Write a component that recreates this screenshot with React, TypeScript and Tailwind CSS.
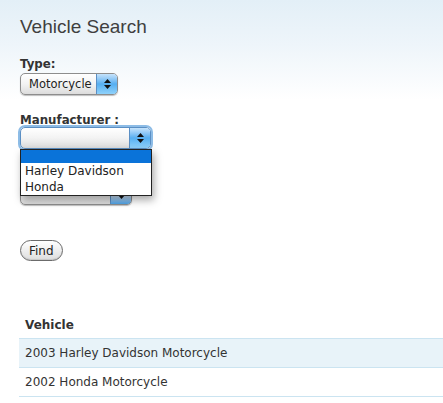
import React from "react";

const bodyFont = { fontFamily: '"DejaVu Sans", Verdana, sans-serif' };

function Arrows({ dim }: { dim?: boolean }) {
	return (
		<div
			className={`flex w-[21px] flex-col items-center justify-center gap-[2px] self-stretch rounded-r-[4px] border-l border-[#5b8fc4] ${
				dim ? "bg-gradient-to-b from-[#f4f8fc] via-[#e6eef7] to-[#4aa3e8]" : "bg-gradient-to-b from-[#c6e3fb] via-[#55aef0] to-[#8fd2fb]"
			}`}>
			<svg width="7" height="4" viewBox="0 0 7 4">
				<path d="M3.5 0L7 4H0z" fill={dim ? "#c8ccd2" : "#111"} />
			</svg>
			<svg width="7" height="4" viewBox="0 0 7 4">
				<path d="M0 0h7L3.5 4z" fill="#111" />
			</svg>
		</div>
	);
}

function FakeSelect({ value, width, focused, dim }: { value: string; width: string; focused?: boolean; dim?: boolean }) {
	return (
		<div
			className={`flex h-[22px] ${width} items-stretch rounded-[5px] border ${
				focused ? "border-[#5b8fc4] shadow-[0_0_0_2px_#8dbce6]" : "border-[#8d8d8d] shadow-[0_1px_1px_rgba(0,0,0,0.25)]"
			} bg-gradient-to-b from-white via-[#f3f3f3] to-[#dcdcdc]`}>
			<span className="flex-1 truncate pl-2 text-[11.5px] leading-[20px] text-[#222]" style={bodyFont}>
				{value}
			</span>
			<Arrows dim={dim} />
		</div>
	);
}

export default function App() {
	return (
		<div className="min-h-[403px] w-[443px] bg-white" style={bodyFont}>
			<div className="bg-[linear-gradient(to_bottom,#e3eff7_0px,#eef5fa_45px,#ffffff_100px)] bg-no-repeat">
				<div className="pl-[20px] pt-[15px]">
					<h1 className="text-[19px] leading-[24px] text-[#3f3f3f]" style={{ fontFamily: '"Liberation Sans", Arial, sans-serif' }}>
						Vehicle Search
					</h1>

					<label className="mt-[18px] block text-[11.8px] font-bold leading-[14px] text-[#333]">Type:</label>
					<div className="mt-[2px]">
						<FakeSelect value="Motorcycle" width="w-[98px]" />
					</div>

					<label className="mt-[18px] block text-[11.8px] font-bold leading-[14px] text-[#333]">Manufacturer :</label>
					<div className="relative">
						<FakeSelect value="" width="w-[131px]" focused />

						{/* open option list */}
						<div className="absolute left-0 top-[22px] z-10 w-[132px] border border-[#222] bg-white shadow-[2px_4px_8px_rgba(0,0,0,0.35)]">
							<div className="h-[13px] bg-[#0a73d9]" />
							<div className="px-[4px] text-[12px] leading-[16px] text-[#222]">Harley Davidson</div>
							<div className="px-[4px] text-[12px] leading-[16px] text-[#222]">Honda</div>
						</div>
					</div>

					<div className="mt-[34px]">
						<FakeSelect value="" width="w-[112px]" dim />
					</div>

					<button className="mt-[35px] h-[21px] rounded-full border border-[#6b6b6b] bg-gradient-to-b from-white to-[#dedede] px-[8px] text-[12px] leading-[18px] text-[#222] shadow-[inset_0_-1px_1px_rgba(0,0,0,0.1)]">
						Find
					</button>
				</div>

				<table className="ml-[19px] mt-[50px] w-[424px] border-collapse text-[12px] text-[#333]">
					<thead>
						<tr>
							<th className="h-[27px] px-[6px] text-left font-bold">Vehicle</th>
						</tr>
					</thead>
					<tbody>
						<tr className="border-y border-[#cbe4f1] bg-[#e8f3f9]">
							<td className="h-[29px] px-[6px]">2003 Harley Davidson Motorcycle</td>
						</tr>
						<tr className="border-b border-[#cbe4f1]">
							<td className="h-[29px] px-[6px]">2002 Honda Motorcycle</td>
						</tr>
					</tbody>
				</table>
			</div>
		</div>
	);
}
